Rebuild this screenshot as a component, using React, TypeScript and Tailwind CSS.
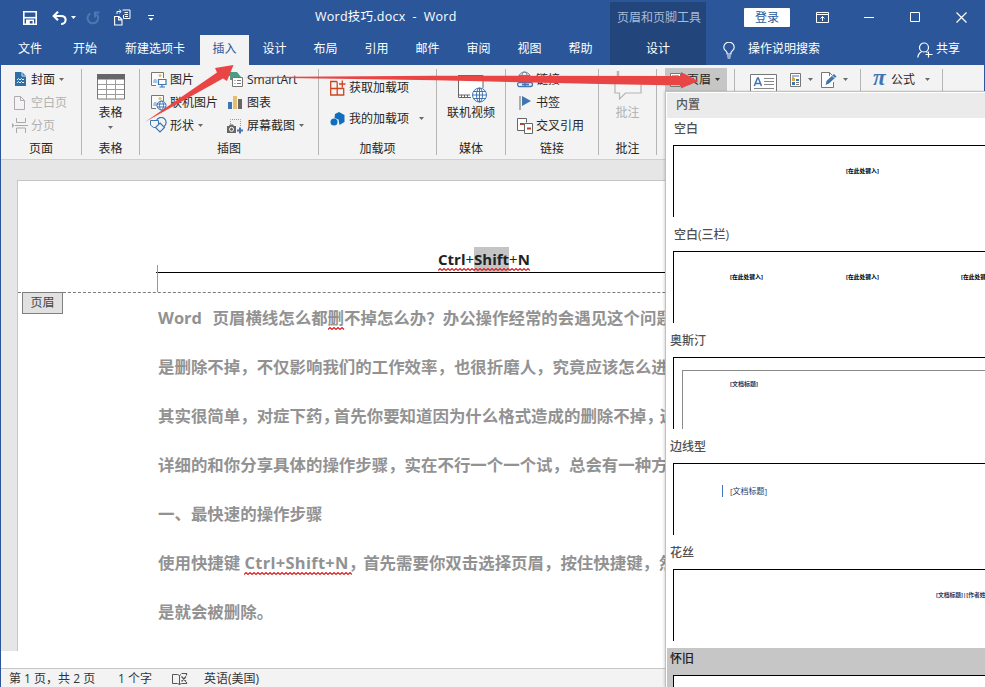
import type { ReactNode } from "react";

type IconProps = { w: number; h: number; className?: string; children: ReactNode };

function Glyph({ w, h, className = "", children }: IconProps) {
  return (
    <svg width={w} height={h} viewBox={`0 0 ${w} ${h}`} fill="none" className={`flex-none ${className}`}>
      {children}
    </svg>
  );
}

function Caret({ className = "text-[#6a6a6a]" }: { className?: string }) {
  return (
    <Glyph w={5} h={3} className={className}>
      <path d="M0 0h5L2.500 3z" fill="currentColor" />
    </Glyph>
  );
}

function SaveIcon() {
  return (
    <Glyph w={14} h={14} className="ml-[23px] mt-px">
      <path d="M.8.8h12.400v12.400H.8z" stroke="#fff" strokeWidth="1.600" />
      <path d="M1 6.700h12" stroke="#fff" strokeWidth="1.600" />
      <path d="M3.700 13V9.300h6.600V13" stroke="#fff" strokeWidth="1.400" />
      <path d="M4 9.500h2.800V13H4z" fill="#fff" />
    </Glyph>
  );
}

function UndoIcon() {
  return (
    <Glyph w={15} h={14} className="ml-[15px]">
      <path d="M1.500 5h7.500c3.200 0 4.600 1.600 4.600 3.700 0 2.300-1.700 4.300-4.500 4.300" stroke="#fff" strokeWidth="2.100" />
      <path d="M6 .7 1.700 5 6 9.300" stroke="#fff" strokeWidth="2.100" />
    </Glyph>
  );
}

function RedoIcon() {
  return (
    <Glyph w={14} h={14} className="ml-[10px]">
      <path d="M4.500 2.300A5.300 5.300 0 1 0 10.500 3.200" stroke="#5077b1" strokeWidth="2" />
      <path d="M9 6.500V1.500h4.500" stroke="#5077b1" strokeWidth="2" />
    </Glyph>
  );
}

function FormatCopyIcon() {
  return (
    <Glyph w={17} h={17} className="ml-[14px]">
      <path d="M.6 7.500h4.400l3 3V16H.6zM4.600 7.500v3.400H8" stroke="#fff" strokeWidth="1.100" />
      <path d="M8.500 1H16v8.500H9.500V6M10.500 3.500H14M10.500 5.500H14M11 7.500h3" stroke="#fff" />
      <path d="M3 5V2.500h3.500M5.300.7 7.200 2.500 5.300 4.300" stroke="#fff" />
    </Glyph>
  );
}

const leftTabs = [
  { name: "文件", width: "w-[60px]" },
  { name: "开始", width: "w-[50px]" },
  { name: "新建选项卡", width: "w-[90px]" },
  { name: "插入", width: "w-[49px]", active: true },
  { name: "设计", width: "w-[51px]" },
  { name: "布局", width: "w-[51px]" },
  { name: "引用", width: "w-[51px]" },
  { name: "邮件", width: "w-[51px]" },
  { name: "审阅", width: "w-[51px]" },
  { name: "视图", width: "w-[51px]" },
  { name: "帮助", width: "w-[51px]" },
];

function TitleArea() {
  return (
    <header className="flex h-[65px] flex-none bg-[#2b579a] text-white">
      <div className="flex w-[610px] flex-col">
        <div className="flex h-[35px] items-center">
          <SaveIcon />
          <UndoIcon />
          <Caret className="ml-[4px] text-white" />
          <RedoIcon />
          <FormatCopyIcon />
          <Glyph w={6} h={6} className="ml-[17px]">
            <path d="M0 .5h6" stroke="#fff" />
            <path d="M.5 3h5L3 5.800z" fill="#fff" />
          </Glyph>
          <span className="-mt-px ml-[161px] whitespace-pre text-[12.5px] tracking-[0.25px]">Word技巧.docx  -  Word</span>
        </div>
        <nav className="flex h-[30px]">
          {leftTabs.map((tab) => (
            <div
              key={tab.name}
              className={`${tab.width} flex-none pt-[4px] text-center leading-[20px] ${tab.active ? "bg-[#f3f3f3] text-[#2b579a]" : ""}`}
            >
              {tab.name}
            </div>
          ))}
        </nav>
      </div>
      <div className="mt-[2px] flex w-[96px] flex-col bg-[#22457b] text-center">
        <div className="h-[33px] pl-[2px] pt-[6px] leading-[20px] text-[#a9bcd9]">页眉和页脚工具</div>
        <div className="pt-[4px] leading-[20px]">设计</div>
      </div>
      <div className="flex flex-1 flex-col">
        <div className="flex h-[34px] items-center">
          <div className="ml-[38px] h-[19px] w-[46px] rounded-[1px] bg-white text-center leading-[19px] text-[#2b579a]">登录</div>
          <Glyph w={13} h={11} className="ml-[26px]">
            <path d="M.5.500h12v10H.5zM.5 2.500h12M6.500 9V4.500M4.500 6.500l2-2 2 2" stroke="#fff" />
          </Glyph>
          <Glyph w={11} h={11} className="ml-[35px]">
            <path d="M0 5.500h10" stroke="#fff" />
          </Glyph>
          <Glyph w={11} h={11} className="ml-[35px]">
            <path d="M.5.500h9v9h-9z" stroke="#fff" />
          </Glyph>
          <Glyph w={11} h={11} className="ml-[35px]">
            <path d="m.5.500 10 10m0-10-10 10" stroke="#fff" strokeWidth="1.200" />
          </Glyph>
        </div>
        <div className="flex h-[30px] items-center">
          <Glyph w={12} h={17} className="ml-[17px] mt-[2px]">
            <path d="M4 12V10.500C3.500 9 .8 8 .8 5.400a5.200 5.200 0 0 1 10.400 0C11.200 8 8.500 9 8 10.500V12zM4 14h4M4.500 16h3" stroke="#fff" strokeWidth="1.100" />
          </Glyph>
          <span className="ml-[13px]">操作说明搜索</span>
          <Glyph w={16} h={17} className="ml-[97px] mt-[3px]">
            <circle cx="7" cy="5.500" r="4.500" stroke="#fff" strokeWidth="1.200" />
            <path d="M.8 15.500c.3-3 2-5 4-6M9 9.500l1.500 1M11.500 9.500v6M8.500 12.500h7" stroke="#fff" strokeWidth="1.200" />
          </Glyph>
          <span className="ml-[3px]">共享</span>
        </div>
      </div>
    </header>
  );
}

function Group({ label, width, children }: { label?: string; width: string; children: ReactNode }) {
  return (
    <div className={`flex h-[93px] flex-none pt-[3px] ${width}`}>
      <div className="flex min-w-0 flex-1 flex-col">
        <div className="h-[70px] flex-none">{children}</div>
        <div className="text-center leading-[22px]">{label}</div>
      </div>
      <div className="mt-px h-[86px] w-px bg-[#b5b5b5]" />
    </div>
  );
}

type CommandProps = { icon: ReactNode; text: string; caret?: boolean; disabled?: boolean; className?: string };

function Command({ icon, text, caret, disabled, className = "" }: CommandProps) {
  return (
    <div className={`flex h-[23px] items-center whitespace-nowrap ${disabled ? "text-[#b1b1b1]" : ""} ${className}`}>
      <span className="flex w-[20px] flex-none items-center">{icon}</span>
      {text}
      {caret && <span className="ml-[4px]"><Caret /></span>}
    </div>
  );
}

function PictureIcon({ online }: { online?: boolean }) {
  return (
    <Glyph w={17} h={17}>
      <path d="M6 14.500H1.500V1.500h12V7" fill="#fbfbfb" stroke="#777" />
      <path d="M3 12c0-5 4-6 4.500 0z" fill="#a9c3de" />
      <circle cx="10" cy="4.500" r="1.500" fill="#e3bf66" />
      {online ? (
        <g stroke="#3f75b0">
          <circle cx="11.500" cy="11.500" r="4.500" fill="#fff" />
          <ellipse cx="11.500" cy="11.500" rx="2" ry="4.500" />
          <path d="M7 10h9M7 13h9" />
        </g>
      ) : (
        <path d="M8.500 8.500h7.500v5H8.500zM12 14v2M9.500 16h5.500" stroke="#3f75b0" strokeWidth="1.200" fill="#fff" />
      )}
    </Glyph>
  );
}

function ShapesIcon() {
  return (
    <Glyph w={17} h={17}>
      <path d="M6.500 3.500a5 5 0 1 1 7.500 6" stroke="#3f75b0" strokeWidth="1.200" />
      <path d="M.5 3.500h8v7H3.500L.5 8z" fill="#f3f3f3" stroke="#3f75b0" />
      <path d="m10 6 4.500 4.500L10 15l-4.500-4.500z" fill="#f3f3f3" stroke="#3f75b0" strokeWidth="1.200" />
    </Glyph>
  );
}

function Ribbon() {
  return (
    <section className="flex h-[95px] flex-none overflow-hidden border-b border-[#cfcfcf] bg-[#f3f3f3] pl-px">
      <Group label="页面" width="w-[81px]">
        <Command
          className="pl-[12px] [&>span:first-child]:w-[18px]"
          text="封面"
          caret
          icon={
            <Glyph w={14} h={15} className="ml-[2px]">
              <path d="M0 0h7l4 4v10H0z" fill="#2f6fa8" />
              <path d="M7 0v4h4" stroke="#d9e6f2" />
              <path d="m2 8 1.500-1.500L5 8l1.500-1.500L8 8l1-1M2 11l1.500-1.500L5 11l1.500-1.500L8 11l1-1" stroke="#fff" strokeWidth=".9" />
            </Glyph>
          }
        />
        <Command
          className="pl-[12px] [&>span:first-child]:w-[18px]"
          text="空白页"
          disabled
          icon={
            <Glyph w={12} h={14} className="ml-px">
              <path d="M.5.500h6l4 4v9H.5zM6.500.500v4h4" stroke="#b1a9b1" />
            </Glyph>
          }
        />
        <Command
          className="pl-[11px] [&>span:first-child]:w-[19px]"
          text="分页"
          disabled
          icon={
            <Glyph w={17} h={15}>
              <path d="M4.500 0v4.500h9V0M4.500 15v-5h9v5M3 7.500h13" stroke="#a9a9a9" />
              <path d="M0 5v5l2.500-2.500z" fill="#a9a9a9" />
            </Glyph>
          }
        />
      </Group>

      <Group label="表格" width="w-[58px]">
        <div className="flex h-full flex-col items-center pt-[6px]">
          <Glyph w={28} h={26}>
            <path d="M.5.500h27v24.500H.5z" fill="#fff" stroke="#777" />
            <path d="M0 0h28v5.500H0z" fill="#666" />
            <path d="M1 10.500h26M1 15.500h26M1 20.500h26M9.500 5v20M18.500 5v20" stroke="#9b9b9b" />
          </Glyph>
          <span className="mt-[4px] leading-[18px]">表格</span>
          <span className="mt-[4px]"><Caret /></span>
        </div>
      </Group>

      <Group label="插图" width="w-[179px]">
        <div className="flex">
          <div className="w-[78px] pl-[10px]">
            <Command text="图片" icon={<PictureIcon />} />
            <Command text="联机图片" icon={<PictureIcon online />} />
            <Command text="形状" caret icon={<ShapesIcon />} />
          </div>
          <div className="pl-[9px]">
            <Command
              text="SmartArt"
              icon={
                <Glyph w={17} h={17}>
                  <path d="M2 1h8l4 5H6L5 9H3V5H0z" fill="#4e9b83" />
                  <path d="M5.500 6.500h10v9h-10z" fill="#fff" stroke="#777" />
                  <path d="M7.500 9.500h1M10 9.500h4M7.500 12.500h1M10 12.500h4" stroke="#777" />
                </Glyph>
              }
            />
            <Command
              text="图表"
              icon={
                <Glyph w={16} h={14} className="ml-px">
                  <path d="M0 6h4v7H0z" fill="#3f75b0" />
                  <path d="M5 0h4v13H5z" fill="#e3bf72" />
                  <path d="M10 3h4v10h-4z" fill="#666" />
                </Glyph>
              }
            />
            <Command
              text="屏幕截图"
              caret
              icon={
                <Glyph w={17} h={16}>
                  <path d="M3.500 6V1.500h10V8" stroke="#999" strokeDasharray="1 1" />
                  <path d="M0 8h2l1-1.500h3L7 8h2v7H0z" fill="#666" />
                  <circle cx="4.500" cy="11.300" r="2" fill="#666" stroke="#fff" />
                  <path d="M13 9.500v6M10 12.500h6" stroke="#3f75b0" strokeWidth="2" />
                </Glyph>
              }
            />
          </div>
        </div>
      </Group>

      <Group label="加载项" width="w-[118px]">
        <div className="flex flex-col gap-[8px] pl-[11px] pt-[8px]">
          <Command
            className="[&>span:first-child]:w-[19px]"
            text="获取加载项"
            icon={
              <Glyph w={16} h={16}>
                <path d="M7 1.500H.7V15h13V8.500H.7M7.200 1.500V15M9 4h6.500M12.300.500v7" stroke="#cf4520" strokeWidth="1.300" />
              </Glyph>
            }
          />
          <Command
            className="[&>span:first-child]:w-[19px] [&>span:last-child]:ml-[10px]"
            text="我的加载项"
            caret
            icon={
              <Glyph w={15} h={14}>
                <path d="m5 2 4-2 5.500 3v7L9.500 13 8.500 7.500 4.500 6z" fill="#106ebe" />
                <circle cx="4" cy="10" r="3.500" fill="#106ebe" />
              </Glyph>
            }
          />
        </div>
      </Group>

      <Group label="媒体" width="w-[69px]">
        <div className="flex h-full flex-col items-center pt-[7px]">
          <Glyph w={30} h={28} className="ml-[3px]">
            <path d="M.5.500h24V23H.5z" fill="#fff" />
            <path d="M.5 0v22.500H13M0 .500h25V13M0 20h12M3.500 20v3M6.500 20v3M9.500 20v3" stroke="#666" />
            <g stroke="#3f75b0">
              <circle cx="21.500" cy="20" r="7" fill="#fff" />
              <ellipse cx="21.500" cy="20" rx="3" ry="7" />
              <path d="M21.500 13v14M14.500 20h14M15.500 16.500h12M15.500 23.500h12" />
            </g>
          </Glyph>
          <span className="mt-px leading-[18px]">联机视频</span>
        </div>
      </Group>

      <Group label="链接" width="w-[93px]">
        <div className="pl-[10px]">
          <Command
            text="链接"
            icon={
              <Glyph w={17} h={17} className="ml-px">
                <g stroke="#6f7f93">
                  <circle cx="7.500" cy="7" r="6" />
                  <ellipse cx="7.500" cy="7" rx="3" ry="6" />
                  <path d="M2 4.500h11M1.500 8.500h12" />
                </g>
                <path d="M2 11.500h6v4H3.500A2 2 0 0 1 2 11.500zM8 11.500h5.500a2 2 0 0 1 0 4H8M5 13.500h7" stroke="#3f75b0" strokeWidth="1.300" fill="#f3f3f3" />
              </Glyph>
            }
          />
          <Command
            text="书签"
            icon={
              <Glyph w={14} h={14} className="ml-[3px]">
                <path d="M1 0v14" stroke="#666" />
                <path d="m3 0 9 5-9 5z" fill="#3f75b0" />
              </Glyph>
            }
          />
          <Command
            text="交叉引用"
            icon={
              <Glyph w={17} h={16} className="ml-px">
                <path d="M7 12.500H.5V.500h9v4" fill="#fff" stroke="#666" />
                <path d="M7.500 5.500h8v10h-8z" fill="#fff" stroke="#666" />
                <path d="M3 6h4M10 10.500h4" stroke="#b5472f" strokeWidth="1.800" />
              </Glyph>
            }
          />
        </div>
      </Group>

      <Group label="批注" width="w-[58px]">
        <div className="flex h-full flex-col items-center pt-[3px] text-[#b1b1b1]">
          <Glyph w={28} h={29}>
            <path d="M1 9.500V22h4.500v6l6-6H27V9.500zM4 0v10" stroke="#b5b5b5" strokeWidth="1.200" fill="#f5f5f5" />
            <path d="M4 0v9" stroke="#b5b5b5" strokeWidth="2.500" />
          </Glyph>
          <span className="mt-[4px] leading-[18px]">批注</span>
        </div>
      </Group>

      <Group width="w-[78px]">
        <div className="ml-[8px] flex h-[23px] w-[62px] items-center bg-[#c6c6c6]">
          <Glyph w={12} h={14} className="ml-[5px]">
            <path d="M.5.500h10v13H.5z" fill="#fff" stroke="#777" />
            <path d="M2 2h7v3H2z" fill="#d9a441" />
          </Glyph>
          <span className="ml-[5px]">页眉</span>
          <span className="ml-[4px]"><Caret className="text-[#333]" /></span>
        </div>
      </Group>

      <Group width="w-[126px]">
        <div className="flex h-[23px] items-center">
          <Glyph w={28} h={17} className="ml-[15px] mt-[6px]">
            <path d="M.5.500h26v17H.5z" fill="#fff" stroke="#777" />
            <path d="M14 4.500h10M14 7.500h10M14 10.500h10M4 14.500h20" stroke="#888" />
            <path d="m4.300 12 3.200-8h.8l3.200 8M5.500 9.500h5" stroke="#3f75b0" strokeWidth="1.500" />
          </Glyph>
          <Glyph w={11} h={14} className="ml-[12px]">
            <path d="M.5.500h10v13H.5z" fill="#fff" stroke="#777" />
            <path d="M2 3h7M2 5h2" stroke="#3f75b0" strokeWidth="1.200" />
            <path d="M2 5h3v3H2z" fill="#d9a441" />
            <path d="M6 6h3v2H6zM2 9h3v3H2z" fill="#3f75b0" />
            <path d="M6 9.500h3M6 11.500h3" stroke="#777" />
          </Glyph>
          <span className="ml-[7px]"><Caret /></span>
          <Glyph w={16} h={16} className="ml-[8px]">
            <path d="M12.500 10v5.500H.5V.500h8l3 3M8.500.500V4" stroke="#777" fill="#fff" />
            <path d="m4.500 13 1-4 7.500-7 2.500 2.500-7.500 7z" fill="#3f75b0" />
            <path d="m11 3.500 2.700 2.700" stroke="#fff" strokeWidth=".8" />
          </Glyph>
          <span className="ml-[6px]"><Caret /></span>
        </div>
      </Group>

      <Group width="w-[82px]">
        <div className="flex h-[23px] items-center">
          <span className="ml-[12px] w-[18px] pb-[3px] font-[Liberation_Serif] text-[23px] font-bold italic leading-[20px] text-[#3f75b0]">π</span>
          公式
          <span className="ml-[10px]"><Caret /></span>
        </div>
      </Group>
      <div className="ml-auto w-px bg-[#2b579a]" />
    </section>
  );
}

function Squiggle({ width, className }: { width: number; className: string }) {
  let d = "M0 2.500";
  for (let x = 2; x <= width; x += 2) {
    d += `L${x} ${x % 4 === 2 ? 0.5 : 2.5}`;
  }
  return (
    <svg width={width} height={3} className={`absolute ${className}`} fill="none">
      <path d={d} stroke="#e01b1b" strokeWidth="1.100" />
    </svg>
  );
}

// Full-width punctuation, kept as escapes so it isn't confused with the ASCII marks
const COMMA = "\uff0c";
const QUESTION = "\uff1f";

function DocumentArea() {
  return (
    <main className="flex h-[508px] flex-none overflow-hidden bg-white">
      <div className="h-[491px] w-[17px] flex-none bg-[#e6e6e6]" />
      <div className="flex min-w-0 flex-1 flex-col">
        <div className="h-[20px] flex-none bg-[#e6e6e6]" />
        <div className="h-[471px] border-l border-t border-[#c6c6c6] bg-white">
          <div className="flex h-[112px] border-b border-dashed border-[#7c7c7c]">
            <div className="mt-[84px] h-[27px] w-px flex-none translate-x-[139px] bg-[#9a9a9a]" />
            <div className="ml-[137px] flex h-[92px] flex-1 items-end border-b border-black pl-[282px]">
              <div className="relative flex h-[25px] items-center whitespace-nowrap text-[15px] font-bold leading-[25px] text-[#222]">
                <span>Ctrl<span className="font-normal">+</span></span>
                <span className="h-[25px] bg-[#c4c4c4]">Shift</span>
                <span><span className="font-normal">+</span>N</span>
                <Squiggle width={92} className="bottom-[1px] left-0" />
              </div>
            </div>
          </div>
          <div className="-mt-px h-[22px] w-[41px] translate-x-[4px] border border-[#7f7f7f] bg-[#e1e1e1] text-center leading-[19px] text-[#444]">页眉</div>
          <article className="-mt-[22px] ml-[140px] whitespace-pre pt-[1px] text-[16.45px] font-bold leading-[49px] text-[#929292]">
            <p>
              Word <span className="tracking-[2px]"> </span>页眉横线怎么都
              <span className="relative">
                删
                <Squiggle width={17} className="bottom-[-1px] left-0" />
              </span>
              不掉怎么办{QUESTION}办公操作经常的会遇见这个问题
            </p>
            <p>{`是删除不掉${COMMA}不仅影响我们的工作效率${COMMA}也很折磨人${COMMA}究竟应该怎么进`}</p>
            <p>
              {`其实很简单${COMMA}对症下药`}
              <span className="tracking-[-5px]">{COMMA}</span>
              首先你要知道因为什么格式造成的删除不掉
              <span className="tracking-[-3px]">{COMMA}</span>这
            </p>
            <p>{`详细的和你分享具体的操作步骤${COMMA}实在不行一个一个试${COMMA}总会有一种方`}</p>
            <p>一、最快速的操作步骤</p>
            <p>
              使用快捷键{" "}
              <span className="relative tracking-[0.3px]">
                Ctrl+Shift+N
                <Squiggle width={108} className="bottom-[-1px] left-0" />
              </span>
              <span className="tracking-[-2px]">{COMMA}</span>
              {`首先需要你双击选择页眉${COMMA}按住快捷键${COMMA}然`}
            </p>
            <p>是就会被删除。</p>
          </article>
        </div>
      </div>
    </main>
  );
}

function StatusBar() {
  return (
    <footer className="flex h-[19px] flex-none items-center whitespace-pre border-t border-[#c6c6c6] bg-[#f3f3f3] pl-[9px] pt-[2px] text-[#333]">
      <span className="w-[109px]">{`第 1 页${COMMA}共 2 页`}</span>
      <span className="w-[54px]">1 个字</span>
      <Glyph w={16} h={12}>
        <path d="M9 1.500 7.500 2.500 5.500 1.500H.5v9h5l2 1 2-1M7.500 2.500v9" stroke="#555" />
        <path d="M9.500.500h5v2M9.500 10.500h5V9M9.500 3.500l4.500 5M14 3.500l-4.500 5" stroke="#555" strokeWidth="1.200" />
      </Glyph>
      <span className="ml-[16px]">英语(美国)</span>
    </footer>
  );
}

type HeaderStyle = { name: string; wide?: boolean; hovered?: boolean; preview?: ReactNode };

const placeholder = "[在此处键入]";

const headerStyles: HeaderStyle[] = [
  {
    name: "空白",
    wide: true,
    preview: <div className="pl-[172px] pt-[21px] text-[5.8px] font-bold leading-[8px] text-black">{placeholder}</div>,
  },
  {
    name: "空白(三栏)",
    wide: true,
    preview: (
      <div className="flex pl-[56px] pt-[21px] text-[5.8px] font-bold leading-[8px] text-black">
        <span className="w-[116px] flex-none">{placeholder}</span>
        <span className="w-[115px] flex-none">{placeholder}</span>
        <span className="flex-none">{placeholder}</span>
      </div>
    ),
  },
  {
    name: "奥斯汀",
    preview: (
      <div className="ml-[8px] mt-[12px] h-[59px] border-l border-t border-[#8a8a8a] pl-[47px] pt-[9px] text-[6px] font-bold leading-[8px] text-[#1f3864]">
        [文档标题]
      </div>
    ),
  },
  {
    name: "边线型",
    preview: (
      <div className="flex items-center pl-[48px] pt-[21px] text-[8px] leading-[12px] text-[#1f3864]">
        <span className="mr-[7px] h-[12px] w-px bg-[#4472c4]" />
        [文档标题]
      </div>
    ),
  },
  {
    name: "花丝",
    preview: <div className="pl-[262px] pt-[21px] text-[5.8px] font-bold leading-[8px] text-[#1f3864]">[文档标题]|[作者姓名]</div>,
  },
  { name: "怀旧", hovered: true },
];

function HeaderGallery() {
  return (
    <div className="absolute left-[665px] top-[91px] h-[596px] w-[320px] overflow-hidden border-l border-t border-[#c0c0c0] bg-white pl-px pt-px shadow-[-1px_0_2px_rgba(0,0,0,0.15)]">
      <div className="h-[25px] bg-[#ebebeb] pl-[9px] font-medium leading-[23px] text-[#5a5a5a]">内置</div>
      {headerStyles.map((style) => (
        <div key={style.name} className={`h-[106px] ${style.hovered ? "bg-[#c6c6c6] text-[#222]" : "text-[#505050]"}`}>
          <div className={`h-[27px] font-medium leading-[22px] ${style.wide ? "pl-[7px]" : "pl-[3px]"}`}>{style.name}</div>
          <div className="ml-[6px] h-[72px] overflow-hidden whitespace-nowrap border-l border-t border-black bg-white">{style.preview}</div>
        </div>
      ))}
    </div>
  );
}

// Red callout arrows drawn over the ribbon
function Callouts() {
  return (
    <svg className="pointer-events-none absolute left-0 top-0" width="985" height="170" fill="#ea4545">
      <path d="M145 122 217 72.500 215 68 233.500 65 227 81 223 78.500z" />
      <path d="M243 77.200 436 75.800 681 76V72L698 81 681 88.500V85.500L600 84 436 80.300z" />
    </svg>
  );
}

export default function App() {
  return (
    <div className="relative flex h-[687px] w-[985px] flex-col overflow-hidden bg-white font-['Open_Sans','Noto_Sans_CJK_SC',sans-serif] text-[12px] leading-[18px] text-[#262626]">
      <TitleArea />
      <Ribbon />
      <DocumentArea />
      <StatusBar />
      <HeaderGallery />
      <Callouts />
      <div className="absolute left-0 top-[65px] h-[622px] w-px bg-[#2b579a]" />
    </div>
  );
}
